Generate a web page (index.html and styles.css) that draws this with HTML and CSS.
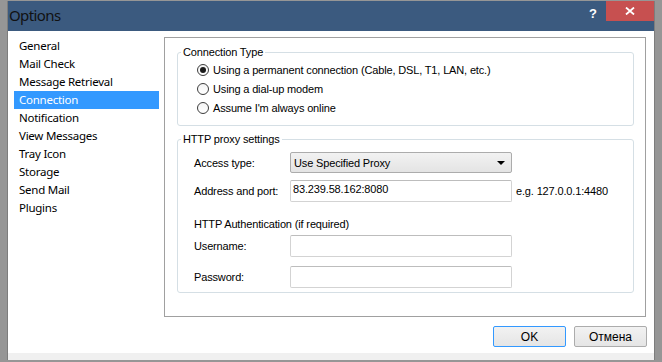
FILE: index.html
```html
<!DOCTYPE html>
<html lang="en">
<head>
  <meta charset="UTF-8" />
  <title>Options</title>
  <link rel="stylesheet" href="styles.css">
</head>
<body>
  <div class="window">
    <div class="titlebar">
      <span class="title">Options</span>
      <span class="help">?</span>
      <span class="close">
        <svg width="10" height="8" viewBox="0 0 10 8"><path d="M1 0.5 L9 7.5 M9 0.5 L1 7.5" stroke="#fff" stroke-width="1.8"/></svg>
      </span>
    </div>

    <div class="body">
      <ul class="nav">
        <li>General</li>
        <li>Mail Check</li>
        <li>Message Retrieval</li>
        <li class="active">Connection</li>
        <li>Notification</li>
        <li>View Messages</li>
        <li>Tray Icon</li>
        <li>Storage</li>
        <li>Send Mail</li>
        <li>Plugins</li>
      </ul>

      <div class="panel">
        <fieldset class="group conn">
          <legend>Connection Type</legend>
          <div class="radio"><span class="dot checked"></span>Using a permanent connection (Cable, DSL, T1, LAN, etc.)</div>
          <div class="radio"><span class="dot"></span>Using a dial-up modem</div>
          <div class="radio"><span class="dot"></span>Assume I'm always online</div>
        </fieldset>

        <fieldset class="group proxy">
          <legend>HTTP proxy settings</legend>
          <div class="row first">
            <span class="lbl">Access type:</span>
            <div class="combo">Use Specified Proxy<span class="arrow"></span></div>
          </div>
          <div class="row addr">
            <span class="lbl">Address and port:</span>
            <div class="field">83.239.58.162:8080</div>
            <span class="hint">e.g. 127.0.0.1:4480</span>
          </div>
          <div class="auth">HTTP Authentication (if required)</div>
          <div class="row user">
            <span class="lbl">Username:</span>
            <div class="field"></div>
          </div>
          <div class="row pass">
            <span class="lbl">Password:</span>
            <div class="field"></div>
          </div>
        </fieldset>
      </div>
    </div>

    <div class="buttons">
      <button class="btn default">OK</button>
      <button class="btn">Отмена</button>
    </div>
  </div>
</body>
</html>
```

FILE: styles.css
```css
:root {
  --titlebar: #3b5a7f;
  --close: #c75050;
  --select: #3399ff;
  --panel-border: #a0a0a0;
  --group-border: #d5dfe5;
  --field-border: #d3d3d3;
}

* {
  box-sizing: border-box;
}

body {
  margin: 0;
  background: #969696;
  font-family: "Liberation Sans", Arial, sans-serif;
  font-size: 11px;
  color: #000;
}

.window {
  margin: 1px 8px 0;
  width: 646px;
  height: 359px;
  background: #fff;
  border-bottom: 7px solid #f0f0f0;
  box-shadow: -1px 0 0 #7d7d7d, 1px 0 0 #7d7d7d, 0 1px 0 #6f6f6f;
}

.titlebar {
  height: 30px;
  background: var(--titlebar);
  display: flex;
  align-items: flex-start;
}

.title {
  font-family: "Noto Sans", "Open Sans", sans-serif;
  font-size: 15px;
  letter-spacing: -0.6px;
  color: #111;
  padding: 4px 0 0 1px;
  flex: 1;
}

.help {
  color: #fff;
  font-weight: bold;
  font-size: 13px;
  padding-top: 5px;
  width: 17px;
}

.close {
  width: 48px;
  height: 20px;
  background: var(--close);
  display: flex;
  align-items: center;
  justify-content: center;
}

.body {
  display: grid;
  grid-template-columns: 145px 1fr;
  column-gap: 5px;
  padding: 6px 8px 0 6px;
}

.nav {
  list-style: none;
  margin: 0;
  padding: 0;
  font-family: "Noto Sans", "Open Sans", sans-serif;
  font-size: 11.5px;
  letter-spacing: -0.25px;
}

.nav li {
  height: 18px;
  line-height: 18px;
  padding-left: 5px;
}

.nav li.active {
  background: var(--select);
  color: #fff;
}

.panel {
  height: 280px;
  border: 1px solid var(--panel-border);
  padding: 8px 11px 0 12px;
  letter-spacing: -0.15px;
}

.group {
  margin: 0;
  padding: 0;
  border: 1px solid var(--group-border);
  border-radius: 3px;
}

.group legend {
  padding: 0 2px;
  margin-left: 3px;
  line-height: 13px;
}

.conn {
  padding: 2px 0 8px 0;
}

.radio {
  height: 18px;
  padding-left: 19px;
  display: flex;
  align-items: center;
}

.radio + .radio {
  height: 19px;
}

.dot {
  width: 12px;
  height: 12px;
  border: 1px solid #3c3c3c;
  border-radius: 50%;
  background: linear-gradient(#f4f4f4, #fff);
  margin-right: 4px;
  display: flex;
  align-items: center;
  justify-content: center;
}

.dot.checked::after {
  content: "";
  width: 6px;
  height: 6px;
  border-radius: 50%;
  background: #1a1a1a;
}

.proxy {
  margin-top: 7px;
  padding: 0 0 4px 0;
}

.row {
  display: flex;
  align-items: center;
  padding-left: 16px;
}

.lbl {
  width: 96px;
}

.row.first { margin-top: 6px; }
.row.addr { margin-top: 7px; }
.row.user { margin-top: 4px; }
.row.pass { margin-top: 9px; }

.combo {
  width: 222px;
  height: 21px;
  border: 1px solid #acacac;
  border-radius: 2px;
  background: linear-gradient(#f2f2f2, #e4e4e4);
  padding-left: 3px;
  display: flex;
  align-items: center;
  justify-content: space-between;
}

.arrow {
  width: 0;
  height: 0;
  border-left: 4px solid transparent;
  border-right: 4px solid transparent;
  border-top: 4px solid #000;
  margin-right: 6px;
}

.field {
  width: 222px;
  height: 22px;
  border: 1px solid var(--field-border);
  border-top-color: #bdbdbd;
  border-radius: 2px;
  padding: 2px 0 0 2px;
}

.hint {
  margin-left: 4px;
}

.auth {
  margin-top: 16px;
  padding-left: 16px;
  line-height: 13px;
}

.buttons {
  display: flex;
  justify-content: flex-end;
  gap: 8px;
  margin-top: 9px;
  padding-right: 7px;
}

.btn {
  width: 73px;
  height: 21px;
  border: 1px solid #acacac;
  border-radius: 2px;
  background: linear-gradient(#f2f2f2, #e5e5e5);
  font-family: "Liberation Sans", Arial, sans-serif;
  font-size: 12px;
  color: #000;
  padding: 0;
}

.btn.default {
  border-color: var(--select);
}
```
